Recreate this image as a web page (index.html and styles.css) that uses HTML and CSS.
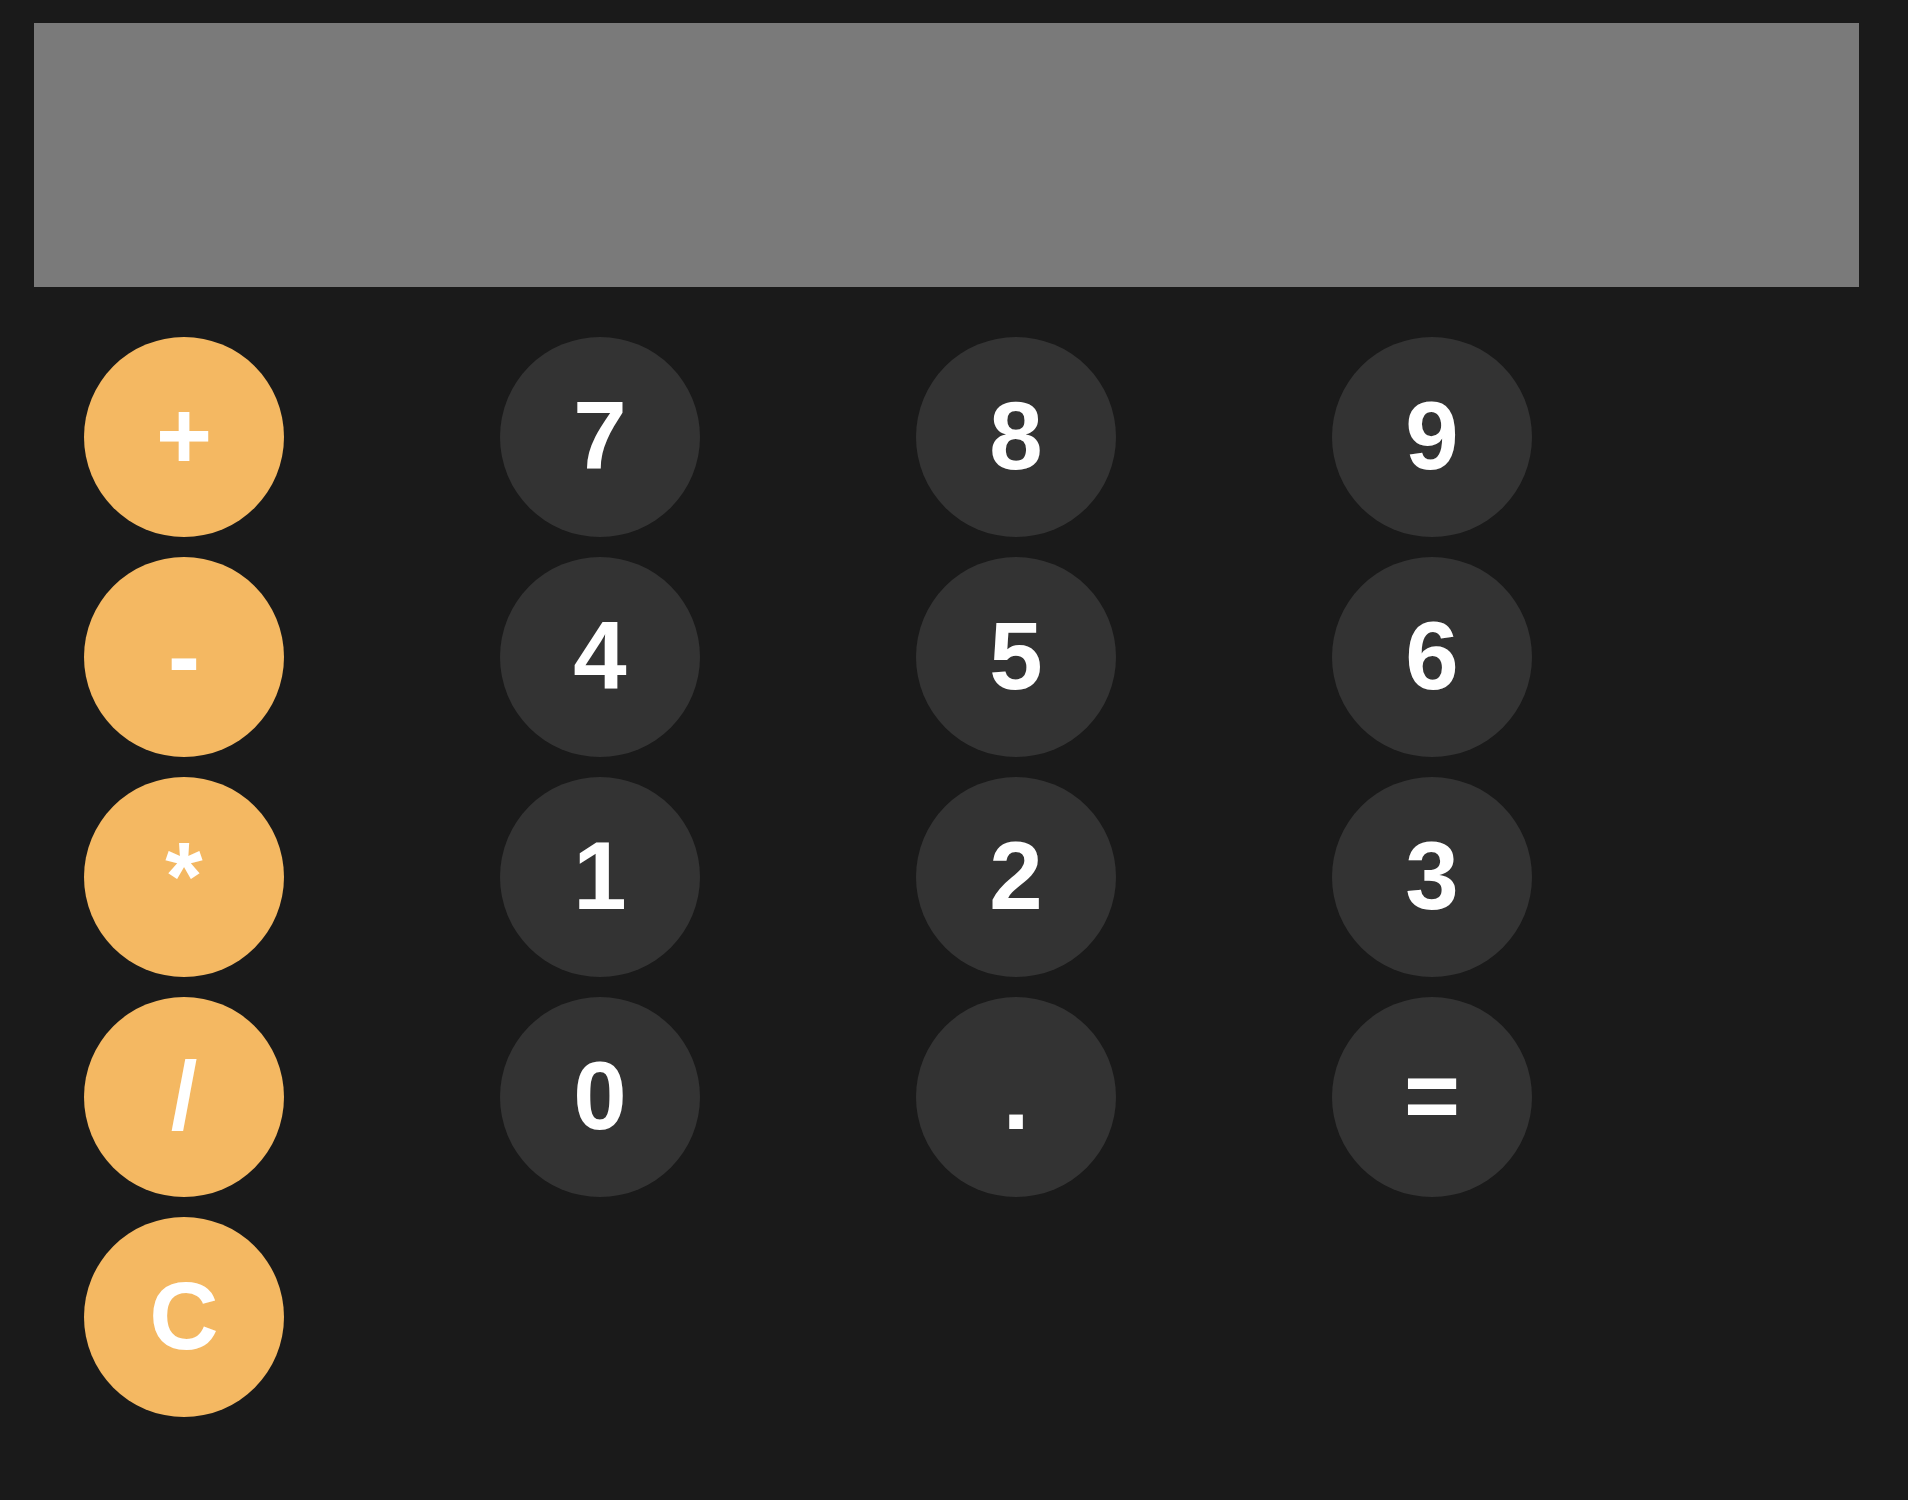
FILE: index.html
```html
<!DOCTYPE html>
<html lang="en">
<head>
<meta charset="utf-8">
<title>Calculator</title>
<link rel="stylesheet" href="styles.css">
</head>
<body>
<div class="calc">
  <div class="display"></div>
  <div class="keypad">
    <div class="ops">
      <button class="key op">+</button>
      <button class="key op">-</button>
      <button class="key op">*</button>
      <button class="key op">/</button>
      <button class="key op">C</button>
    </div>
    <div class="digits">
      <button class="key num">7</button>
      <button class="key num">8</button>
      <button class="key num">9</button>
      <button class="key num">4</button>
      <button class="key num">5</button>
      <button class="key num">6</button>
      <button class="key num">1</button>
      <button class="key num">2</button>
      <button class="key num">3</button>
      <button class="key num">0</button>
      <button class="key num">.</button>
      <button class="key num">=</button>
    </div>
  </div>
</div>
</body>
</html>
```
FILE: styles.css
```css
html, body {
  background: #1a1a1a;
}
body {
  margin: 8px;
  font-family: "Liberation Sans", Arial, sans-serif;
}
.calc {
  padding: 15px 41px 26px 26px;
}
.display {
  height: 264px;
  background: #7a7a7a;
}
.keypad {
  display: flex;
  gap: 216px;
  margin-top: 50px;
  padding-left: 50px;
}
.ops {
  display: flex;
  flex-direction: column;
  gap: 20px;
}
.digits {
  display: grid;
  grid-template-columns: repeat(3, 200px);
  grid-auto-rows: 200px;
  column-gap: 216px;
  row-gap: 20px;
}
.key {
  width: 200px;
  height: 200px;
  border: none;
  border-radius: 50%;
  padding: 0 0 3px 0;
  margin: 0;
  display: flex;
  align-items: center;
  justify-content: center;
  color: #ffffff;
  font-family: "Liberation Sans", Arial, sans-serif;
  font-weight: bold;
  font-size: 96px;
  line-height: 1;
}
.op {
  background: #f4b862;
}
.num {
  background: #333333;
}
```
